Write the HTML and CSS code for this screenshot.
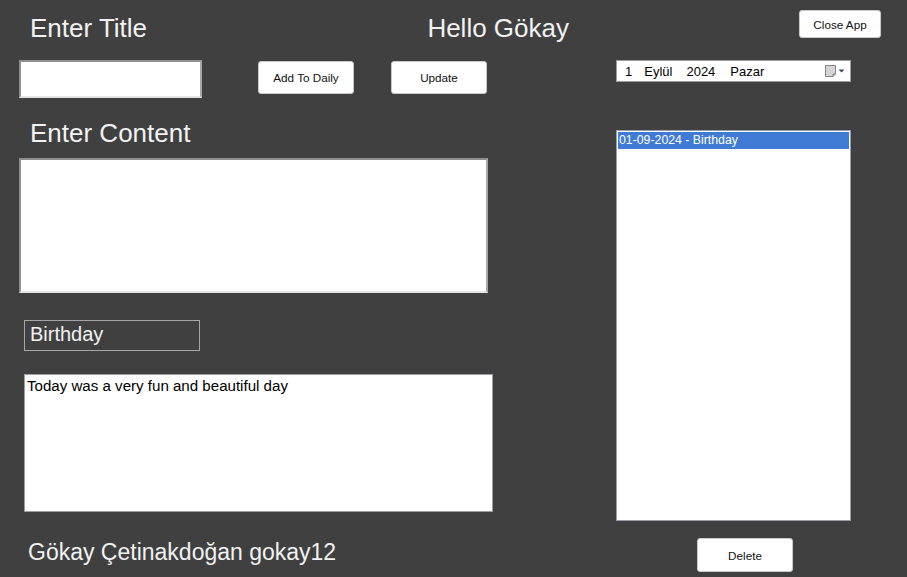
FILE: index.html
```html
<!DOCTYPE html>
<html lang="tr">
<head>
<meta charset="utf-8">
<title>Daily</title>
<link rel="stylesheet" href="styles.css">
</head>
<body>
<div class="app">
  <div class="left">
    <div class="row-head">
      <div class="label big">Enter Title</div>
      <div class="label big">Hello Gökay</div>
    </div>
    <div class="row-input">
      <div class="field title-input"></div>
      <button class="btn btn-add">Add To Daily</button>
      <button class="btn btn-update">Update</button>
    </div>
    <div class="label big content-label">Enter Content</div>
    <div class="field content-input"></div>
    <div class="title-box">Birthday</div>
    <div class="note-box">Today was a very fun and beautiful day</div>
    <div class="label footer">Gökay Çetinakdoğan gokay12</div>
  </div>
  <div class="right">
    <button class="btn btn-close">Close App</button>
    <div class="datepicker">
      <span class="d-day">1</span>
      <span class="d-month">Eylül</span>
      <span class="d-year">2024</span>
      <span class="d-wd">Pazar</span>
      <svg class="cal-icon" width="22" height="14" viewBox="0 0 22 14">
        <path d="M1.5 1.5 H11.5 V10 L9 12.5 H1.5 Z" fill="#d4d4d4" stroke="#858585" stroke-width="1"/>
        <path d="M11.5 10 H9 V12.5" fill="#b5b5b5" stroke="#858585" stroke-width="1"/>
        <path d="M14.5 5.5 H20.5 L17.5 8.5 Z" fill="#3b4a66"/>
      </svg>
    </div>
    <div class="listbox">
      <div class="list-item selected">01-09-2024 - Birthday</div>
    </div>
    <button class="btn btn-delete">Delete</button>
  </div>
</div>
</body>
</html>
```

FILE: styles.css
```css
html, body {
  margin: 0;
  padding: 0;
}
body {
  background: #404040;
  width: 907px;
  height: 577px;
  overflow: hidden;
  font-family: "Liberation Sans", Arial, sans-serif;
}
.app {
  display: flex;
  padding-left: 19px;
  height: 577px;
  box-sizing: border-box;
}
.left {
  width: 550px;
  display: flex;
  flex-direction: column;
}
.label {
  color: #f2f2f2;
}
.big {
  font-size: 26px;
  line-height: 30px;
}
.row-head {
  display: flex;
  justify-content: space-between;
  align-items: flex-start;
  height: 60px;
  padding-top: 13px;
  padding-left: 11px;
  box-sizing: border-box;
}
.row-input {
  display: flex;
  align-items: flex-start;
  height: 38px;
}
.field {
  background: #fff;
  box-sizing: border-box;
  border: 2px solid;
  border-color: #8e8e8e #a8a8a8 #e4e4e4 #8e8e8e;
}
.title-input {
  width: 183px;
  height: 38px;
}
.btn {
  background: #fff;
  border: 1px solid #c9c9c9;
  border-radius: 3px;
  font-family: "Liberation Sans", Arial, sans-serif;
  font-size: 11.7px;
  color: #111;
  padding: 0;
  box-sizing: border-box;
}
.btn-add {
  width: 96px;
  height: 33px;
  margin-left: 56px;
  margin-top: 1px;
}
.btn-update {
  width: 96px;
  height: 33px;
  margin-left: 37px;
  margin-top: 1px;
}
.content-label {
  margin-top: 20px;
  padding-left: 11px;
  height: 30px;
}
.content-input {
  margin-top: 10px;
  width: 469px;
  height: 135px;
}
.title-box {
  margin-top: 27px;
  margin-left: 5px;
  width: 176px;
  height: 31px;
  box-sizing: border-box;
  border: 1px solid #a6a6a6;
  color: #f2f2f2;
  font-size: 20px;
  line-height: 23px;
  padding-left: 5px;
  padding-top: 2px;
}
.note-box {
  margin-top: 23px;
  margin-left: 5px;
  width: 469px;
  height: 138px;
  box-sizing: border-box;
  background: #fff;
  border: 1px solid #9d9daa;
  font-size: 15.1px;
  line-height: 17px;
  padding: 2px 2px 0 2px;
  color: #000;
}
.footer {
  margin-top: 27px;
  margin-left: 9px;
  font-size: 23px;
  line-height: 26px;
}
.right {
  width: 265px;
  margin-left: 47px;
  display: flex;
  flex-direction: column;
}
.btn-close {
  align-self: flex-end;
  width: 82px;
  height: 28px;
  margin-top: 10px;
}
.datepicker {
  margin-top: 22px;
  width: 235px;
  height: 22px;
  box-sizing: border-box;
  background: #fff;
  border: 1px solid #9d9d9d;
  display: flex;
  align-items: center;
  font-size: 13px;
  color: #000;
  padding-left: 8px;
}
.d-month { margin-left: 12px; }
.d-year { margin-left: 14px; }
.d-wd { margin-left: 15px; }
.cal-icon {
  margin-left: auto;
  margin-right: 4px;
}
.listbox {
  margin-top: 48px;
  width: 235px;
  height: 391px;
  box-sizing: border-box;
  background: #fff;
  border: 1px solid #9d9daa;
  padding: 1px 1px 0 1px;
}
.list-item {
  height: 17px;
  line-height: 17px;
  font-size: 12.3px;
  padding-left: 1px;
  color: #000;
}
.list-item.selected {
  background: #3f7bd5;
  color: #fff;
}
.btn-delete {
  width: 96px;
  height: 34px;
  margin-top: 17px;
  margin-left: 81px;
}
```
